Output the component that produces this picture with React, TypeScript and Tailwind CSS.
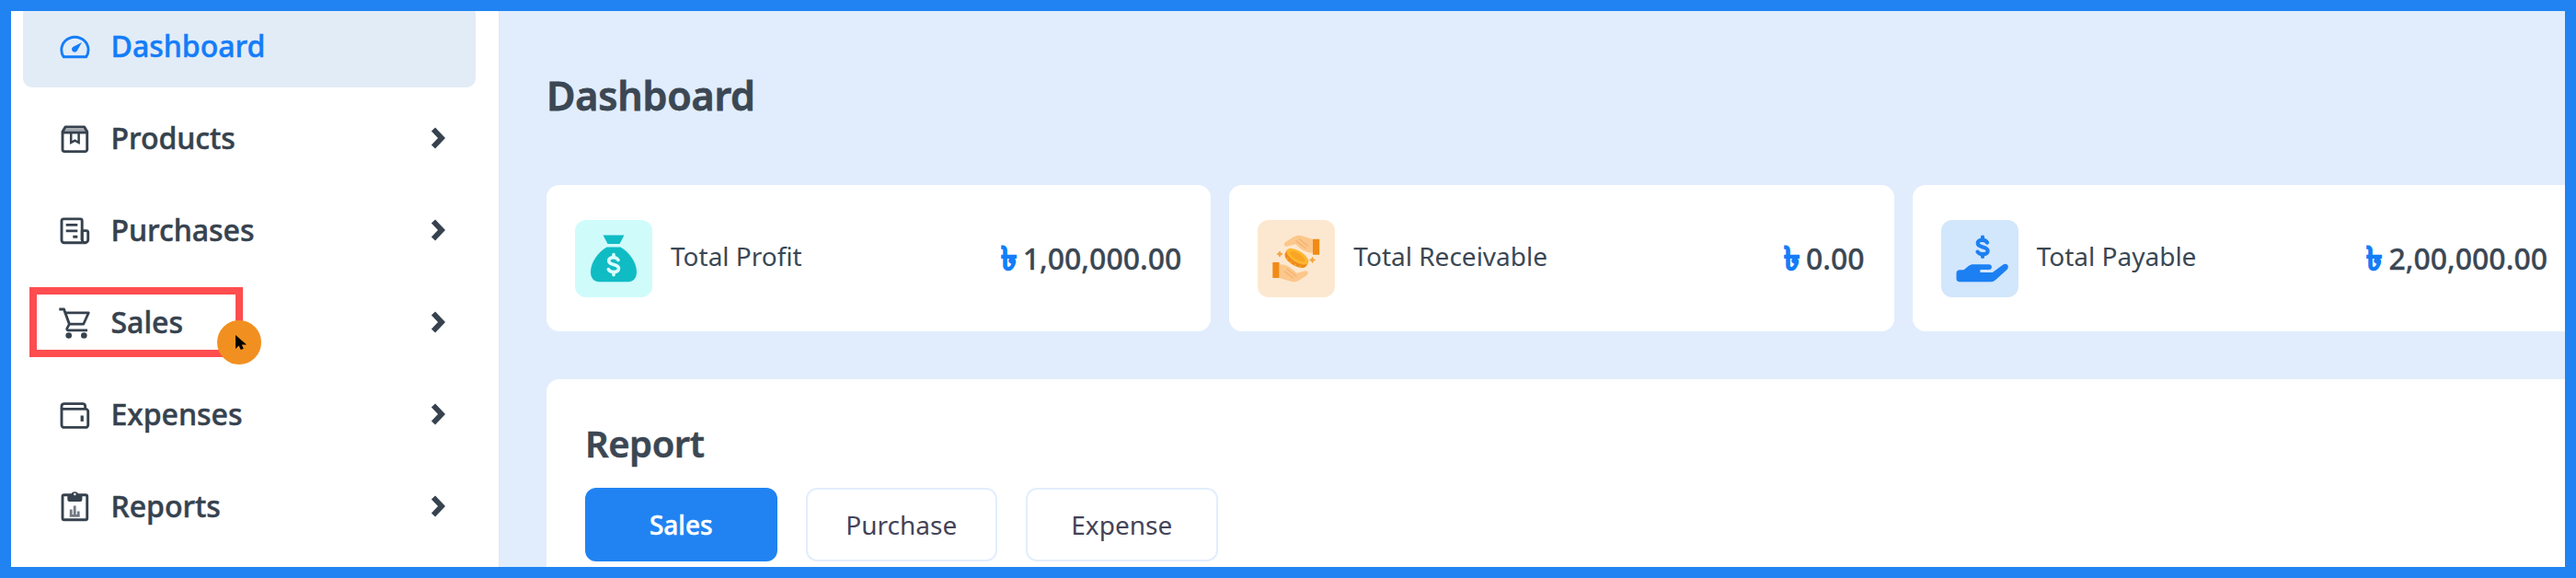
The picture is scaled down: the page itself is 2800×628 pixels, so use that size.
import type { ReactNode } from "react";

function Icon({ children }: { children: ReactNode }) {
  return (
    <svg
      viewBox="0 0 36 36"
      className="size-9 shrink-0"
      fill="none"
      stroke="currentColor"
      strokeWidth="2.900"
      strokeLinejoin="round"
    >
      {children}
    </svg>
  );
}

const GaugeIcon = () => (
  <Icon>
    <path d="M6.2 29.8C4.6 27.6 3.8 25 3.8 22.3a14.6 14.1 0 0 1 29.2 0c0 2.700-.8 5.300-2.400 7.500Z" />
    <path d="M26 14 21.200 22.600a3.200 3.200 0 1 1-5-3.600Z" fill="currentColor" stroke="none" />
  </Icon>
);

const BoxIcon = () => (
  <Icon>
    <path d="M8 5.900h20.700l3 5v19.400a2.300 2.300 0 0 1-2.300 2.300H7.300A2.300 2.300 0 0 1 5 30.300V10.900Z" />
    <path d="M7.500 7.500h21.700l2 3.200H5.500Z" fill="currentColor" fillOpacity=".45" stroke="none" />
    <path d="M5 12h26.700" />
    <path d="M14.200 12v11l4.200-2.300 4.200 2.300V12" strokeWidth="2.500" strokeLinejoin="miter" />
  </Icon>
);

const InvoiceIcon = () => (
  <Icon>
    <path d="M26.200 31.800H6.700A2.700 2.700 0 0 1 4 29.100V7.900a2 2 0 0 1 2-2h18.200a2 2 0 0 1 2 2v21" />
    <path d="M26.200 18.600h4.500a2 2 0 0 1 2 2v7.900a3.250 3.250 0 0 1-6.500 0Z" />
    <path d="M26.200 31.800h3.500" />
    <path d="M8.700 12.400h12.600M8.700 18.900h12.600M16.300 25.300h5" />
  </Icon>
);

const CartIcon = () => (
  <Icon>
    <path d="M1.300 4h5.200l6 16.500" />
    <path d="M7.500 7.900h25.800l-5.600 12.300H12.400L9.800 24.900a1.300 1.300 0 0 0 1.100 1.900H32" strokeWidth="2.700" />
    <circle cx="11.700" cy="32.500" r="3.300" fill="currentColor" stroke="none" />
    <circle cx="28.300" cy="32.500" r="3.300" fill="currentColor" stroke="none" />
  </Icon>
);

const WalletIcon = () => (
  <Icon>
    <path d="M4 12.400v17.300a2.700 2.700 0 0 0 2.700 2.700h23.300a2.700 2.700 0 0 0 2.700-2.700V15.100a2.700 2.700 0 0 0-2.700-2.700Z" />
    <path d="M4 12.400V9.300a2.700 2.700 0 0 1 2.700-2.700h20.200a2.700 2.700 0 0 1 2.700 2.700v3.100" />
    <path d="M26.200 19.500v6.400" strokeWidth="3.200" />
  </Icon>
);

const ClipboardIcon = () => (
  <Icon>
    <rect x="5" y="5.800" width="26.700" height="26.900" rx="1.800" />
    <path
      d="M10.300 5.500h4.200a3.900 3.900 0 0 1 7.700 0h4.200v5.300a2.200 2.200 0 0 1-2.200 2.200H12.500a2.200 2.200 0 0 1-2.200-2.200Z"
      fill="currentColor"
      stroke="none"
    />
    <circle cx="18.350" cy="5" r="1.300" fill="#fff" stroke="none" />
    <path d="M14.200 21.500v8M18.200 17.500v12M22.200 23.500v6M12.700 28.300h11" strokeWidth="2.800" strokeOpacity=".7" />
  </Icon>
);

const Chevron = () => (
  <svg viewBox="0 0 20 28" className="h-7 w-5 shrink-0" fill="none" stroke="currentColor" strokeWidth="5.800">
    <path d="m4 4.600 9 9.400-9 9.400" strokeLinejoin="miter" />
  </svg>
);

const MoneyBag = () => (
  <svg viewBox="0 0 84 84" className="size-full">
    <path d="M30.500 16.500h23l-5 9.500h-13z" fill="#10bcc4" />
    <path
      d="M34.500 29.500h15C59 35 67 46 67 56.500c0 7-4 10.800-9.500 10.800h-31c-5.500 0-9.500-3.800-9.500-10.800C17 46 25 35 34.500 29.500Z"
      fill="#10bcc4"
    />
    <g fill="none" stroke="#dcfdfd" strokeWidth="3.600" strokeLinecap="round" strokeLinejoin="round">
      <path d="M47 43.500c-1-2-2.800-2.800-5.200-2.800-3 0-5 1.400-5 3.700 0 5.400 10.700 2.600 10.700 8.200 0 2.600-2.300 4-5.500 4-2.700 0-4.800-1-5.700-3" />
      <path d="M42 37.500v3M42 56.800v3" />
    </g>
  </svg>
);

const HandsCoin = () => (
  <svg viewBox="0 0 84 84" className="size-full">
    <path
      d="M60.500 21 47 17c-3.500-1-6 .2-9 2l-7.500 4.800c-3 2.200-1.700 5.600 1.700 5l9-2.600c5 5 10 8.300 15 9.200l4.300.4Z"
      fill="#fcc78b"
    />
    <path d="m41.500 22.500 11 8.500M45 20.500l10 8" stroke="#f5b271" strokeWidth="1.500" fill="none" />
    <rect x="60" y="20.800" width="7.200" height="17" fill="#f18b17" />
    <path
      d="m23.500 63 13.500 4c3.500.9 6-.2 9-2l7-4.600c3-2.200 1.700-5.800-1.700-5l-9 2.400c-5-5-9.500-8.300-14.500-9.200l-4.300-.3Z"
      fill="#fcc78b"
    />
    <path d="m42.500 61.500-11-8.500M39 63.500l-10-8" stroke="#f5b271" strokeWidth="1.500" fill="none" />
    <rect x="16.300" y="46" width="7.200" height="17" fill="#f18b17" />
    <g transform="rotate(32 42 42)">
      <path d="M28.500 39.500h27v3.200c0 4.200-6 7-13.500 7s-13.500-2.800-13.500-7Z" fill="#ef8b1b" />
      <ellipse cx="42" cy="39.300" rx="13.500" ry="6.200" fill="#fdb62f" />
      <ellipse cx="42" cy="39.300" rx="9.500" ry="3.400" fill="#f9a524" />
      <path d="M34 46v2.500M39 47.200v2.500M44.500 47.200v2.500M50 46v2.500" stroke="#fdb62f" strokeWidth="1.200" />
    </g>
    <path d="m24 34 .9 2.100 2.100.9-2.100.9-.9 2.100-.9-2.100-2.100-.9 2.100-.9Z" fill="#f9a33d" stroke="#f9a33d" />
    <path d="m59.500 40.500.9 2.100 2.100.9-2.100.9-.9 2.100-.9-2.100-2.100-.9 2.100-.9Z" fill="#f9a33d" stroke="#f9a33d" />
  </svg>
);

const HandDollar = () => (
  <svg viewBox="0 0 84 84" className="size-full">
    <g fill="none" stroke="#1c80f3" strokeWidth="4.200" strokeLinecap="round" strokeLinejoin="round">
      <path d="M50 24.500c-1-2-2.800-2.700-5-2.700-3 0-5.300 1.200-5.300 3.500 0 5.200 10.900 3 10.900 8.200 0 2.400-2.400 3.700-5.600 3.700-2.600 0-4.500-.8-5.500-2.600" />
      <path d="M45 18.500v3M45 37.500v2.500" />
    </g>
    <path
      d="M16.500 58c0-2.500 1.300-3.800 3.800-3.800h4.200l5.200-4.300c1.600-1.200 3-1.700 5-1.700h17.200c4 0 4 5.800 0 5.800h-9.500v3h13.300l11.300-8.300c4.200-2.700 7.800 1.800 4.700 5L59 65.300c-1.600 1.300-3 1.900-5 1.900H20.300c-2.500 0-3.800-1.300-3.800-3.800Z"
      fill="#1c80f3"
    />
  </svg>
);

const navItems = [
  { label: "Dashboard", icon: <GaugeIcon />, active: true },
  { label: "Products", icon: <BoxIcon /> },
  { label: "Purchases", icon: <InvoiceIcon /> },
  { label: "Sales", icon: <CartIcon />, highlighted: true },
  { label: "Expenses", icon: <WalletIcon /> },
  { label: "Reports", icon: <ClipboardIcon /> },
];

const stats = [
  { label: "Total Profit", amount: "1,00,000.00", tile: "bg-[#d0fbfb]", icon: <MoneyBag /> },
  { label: "Total Receivable", amount: "0.00", tile: "bg-[#fce8d1]", icon: <HandsCoin /> },
  { label: "Total Payable", amount: "2,00,000.00", tile: "bg-[#d2e6fc]", icon: <HandDollar /> },
];

const tabs = ["Sales", "Purchase", "Expense"];

function Highlight() {
  return (
    <div className="absolute top-[7px] left-[7px] h-[76px] w-[232px] border-8 border-[#ff4d50]">
      <div className="absolute top-[28px] left-[196px] size-12 rounded-full bg-[#f19020]">
        <svg viewBox="0 0 12 16" className="absolute top-4 left-5 h-4 w-3">
          <path d="M0 0v15l3.600-3.400L5.800 16l3-1.300-2.100-4.200H12Z" fill="#000" />
        </svg>
      </div>
    </div>
  );
}

function Sidebar() {
  return (
    <aside className="w-[531px] shrink-0 border-r border-[#e6e9ed] bg-white">
      <nav className="-mt-[7px] ml-[13px] flex w-[492px] flex-col gap-[10px]">
        {navItems.map((item) => (
          <div
            key={item.label}
            className={
              item.active
                ? "relative flex h-[90px] items-center rounded-[10px] bg-[#e2ecf7] pr-8 pl-[38px] text-[#147df8]"
                : "relative flex h-[90px] items-center rounded-[10px] pr-[30px] pl-[38px] text-[#36424e]"
            }
          >
            {item.icon}
            <span className="ml-[21.5px] flex-1 text-[32px] font-medium [-webkit-text-stroke:0.5px]">{item.label}</span>
            {!item.active && <Chevron />}
            {item.highlighted && <Highlight />}
          </div>
        ))}
      </nav>
    </aside>
  );
}

export default function App() {
  return (
    <div className="flex h-[628px] w-[2800px] overflow-hidden border-12 border-[#2183f2] bg-[#e1edfc] font-['Noto_Sans',sans-serif] text-[#3b4753]">
      <Sidebar />
      <main className="min-w-0 flex-1 overflow-hidden pl-[51px]">
        <h1 className="mt-16 text-[43px] leading-[56px] font-semibold tracking-[-0.2px] [-webkit-text-stroke:0.8px]">
          Dashboard
        </h1>
        <div className="mt-[69px] flex w-[2207px] gap-[20px]">
          {stats.map((s) => (
            <section key={s.label} className="flex h-[159px] flex-1 items-center rounded-[14px] bg-white pr-[32px] pl-[31px]">
              <div className={"size-[84px] rounded-[12px] " + s.tile}>{s.icon}</div>
              <span className="ml-5 flex-1 pb-[5px] text-[28px]">{s.label}</span>
              <span className="flex items-baseline gap-[7px] text-[32px] font-medium [-webkit-text-stroke:0.3px]">
                <span className="text-[35px] leading-none font-bold text-[#147df8] [-webkit-text-stroke:1.3px]">৳</span>
                <span>{s.amount}</span>
              </span>
            </section>
          ))}
        </div>
        <section className="mt-[52px] h-[400px] w-[2207px] rounded-[14px] bg-white px-[42px] pt-[42px]">
          <h2 className="text-[40px] leading-[56px] font-semibold tracking-[-0.5px] [-webkit-text-stroke:0.5px]">Report</h2>
          <div className="mt-5 flex gap-[31px]">
            {tabs.map((t, i) => (
              <button
                key={t}
                className={
                  i === 0
                    ? "h-20 w-[208.5px] rounded-[12px] bg-[#2183f2] text-[28px] font-medium text-white [-webkit-text-stroke:0.5px]"
                    : "h-20 w-[208.5px] rounded-[12px] border-2 border-[#e2eefd] bg-white text-[28px] text-[#444457]"
                }
              >
                {t}
              </button>
            ))}
          </div>
        </section>
      </main>
    </div>
  );
}
